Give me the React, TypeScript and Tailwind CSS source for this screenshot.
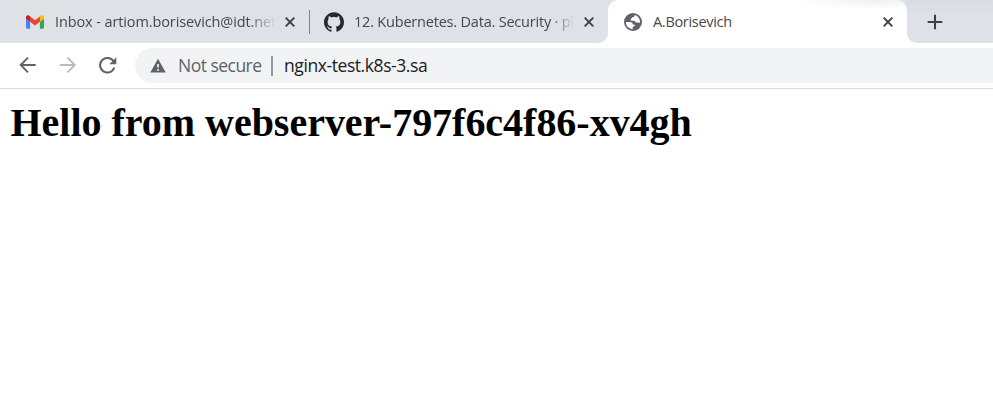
import type { ReactNode } from 'react';
import { SiGithub } from 'react-icons/si';

const CloseIcon = () => (
  <svg className="size-[10px] shrink-0" viewBox="0 0 10 10" fill="none" stroke="#3c4043" strokeWidth="1.9">
    <path d="M.7.7l8.6 8.6M9.3.7L.7 9.3" />
  </svg>
);

const GmailIcon = () => (
  <svg className="h-[14px] w-[18px] shrink-0" viewBox="52 42 88 66">
    <path fill="#4285f4" d="M58 108h14V74L52 59v43c0 3.320 2.690 6 6 6" />
    <path fill="#34a853" d="M120 108h14c3.320 0 6-2.690 6-6V59l-20 15" />
    <path fill="#fbbc04" d="M120 48v26l20-15v-8c0-7.420-8.470-11.650-14.400-7.200" />
    <path fill="#ea4335" d="M72 74V48l24 18 24-18v26L96 92" />
    <path fill="#c5221f" d="M52 51v8l20 15V48l-5.600-4.200C60.470 39.350 52 43.580 52 51" />
  </svg>
);

const GlobeIcon = () => (
  <svg className="size-[18px] shrink-0" viewBox="0 0 18 18">
    <circle cx="9" cy="9" r="9" fill="#5f6368" />
    <path
      fill="#fff"
      d="M10.600 2C10.800 3.400 9.800 4.200 8.400 4.300C7.900 5.600 6.600 5.700 6.600 6.800C6.600 7.900 8 7.700 9.600 7.700C11.200 7.700 11.400 8.800 12 9.700C13.300 9.500 14.500 9.500 16.100 9.900A7.200 7.200 0 0 0 10.600 2Z"
    />
    <path fill="#fff" d="M1.800 9H5.500C7.800 9 8.700 9.700 8.700 11.400H10.500C11.200 12.500 10.500 13.500 8.700 13.700V16.200A7.200 7.200 0 0 1 1.800 9Z" />
  </svg>
);

const TabTitle = ({ children, className }: { children: ReactNode; className: string }) => (
  <span className={`h-5 shrink-0 overflow-hidden whitespace-nowrap text-[14.500px] leading-5 text-[#45494d] ${className}`}>
    {children}
  </span>
);

export default function App() {
  return (
    <div className="h-[402px] w-[993px] overflow-hidden bg-white font-['Open_Sans','Noto_Sans',sans-serif]">
      <div className="flex h-[43px] bg-[#dee1e6]">
        <div className="flex w-[309px] shrink-0 items-center pl-[26px]">
          <GmailIcon />
          <TabTitle className="ml-[11px] w-[221px] tracking-[-0.110px] [mask-image:linear-gradient(to_right,black_87%,transparent)]">
            Inbox - artiom.borisevich@idt.net
          </TabTitle>
          <div className="ml-[9px] flex"><CloseIcon /></div>
        </div>
        <div className="mt-[10px] h-6 w-px shrink-0 bg-[#808489]" />
        <div className="flex w-[298px] shrink-0 items-center pl-[14px]">
          <SiGithub className="size-5 shrink-0 text-[#24292e]" />
          <TabTitle className="ml-[10px] w-[220px] tracking-[-0.200px] [mask-image:linear-gradient(to_right,black_90%,transparent)]">
            12. Kubernetes. Data. Security · pl
          </TabTitle>
          <div className="ml-[10px] flex"><CloseIcon /></div>
        </div>
        <div className="relative flex w-[299px] shrink-0 items-center rounded-t-[10px] bg-white bg-[radial-gradient(ellipse_80px_9px_at_267px_0px,#eef0f2,white)] pl-4">
          <svg className="absolute bottom-0 -left-[10px] size-[10px]" viewBox="0 0 10 10"><path d="M10 0v10H0A10 10 0 0 0 10 0" fill="white" /></svg>
          <GlobeIcon />
          <TabTitle className="ml-[11px] w-[230px] tracking-[-0.300px]">A.Borisevich</TabTitle>
          <CloseIcon />
          <svg className="absolute -right-[10px] bottom-0 size-[10px]" viewBox="0 0 10 10"><path d="M0 0v10h10A10 10 0 0 1 0 0" fill="white" /></svg>
        </div>
        <div className="flex flex-1 items-center bg-linear-to-b from-[#d9dce2] to-[#dee1e6] to-40% pl-[20px]">
          <svg className="size-4" viewBox="0 0 16 16" fill="none" stroke="#3c4043" strokeWidth="2.100" strokeLinecap="round"><path d="M8 1.500v13M1.500 8h13" /></svg>
        </div>
      </div>
      <div className="flex h-[46px] items-center border-b border-[#d8dadd] pl-[19px]">
        <svg className="mb-px size-[18px]" viewBox="0 0 18 18" fill="none" stroke="#5f6368" strokeWidth="1.900"><path d="M16.700 9H2M9 1.700L1.700 9L9 16.300" /></svg>
        <svg className="mb-px ml-[22px] size-[18px]" viewBox="0 0 18 18" fill="none" stroke="#babcbe" strokeWidth="1.900"><path d="M.8 9h14.700M8.500 1.700L15.800 9l-7.300 7.300" /></svg>
        <svg className="mb-px ml-[21px] size-[19px]" viewBox="0 0 19 19"><path d="M15.700 5.600A7.300 7.300 0 1 0 16.300 11.500" fill="none" stroke="#5f6368" strokeWidth="2" /><path d="M18.300 1.300v7h-7z" fill="#5f6368" /></svg>
        <div className="ml-[18px] flex h-[35px] flex-1 items-center rounded-l-full bg-[#f1f3f4] pl-[15px] text-[17.500px]">
          <svg className="size-[16px] shrink-0" viewBox="0 0 16 16"><path d="M8 .8L15.700 14.500H.3z" fill="#5f6368" /><path d="M7.200 6h1.700v3.600H7.200zM7.200 11h1.700v1.700H7.200z" fill="#f1f3f4" /></svg>
          <span className="ml-[12px] w-[93px] shrink-0 whitespace-nowrap tracking-[-0.520px] text-[#5f6368]">Not secure</span>
          <span className="h-5 w-[2px] shrink-0 bg-[#96999c]" />
          <span className="ml-[11px] whitespace-nowrap tracking-[-0.420px] text-[#202124]">nginx-test.k8s-3.sa</span>
        </div>
      </div>
      <h1 className="mt-[11px] ml-[10.500px] font-['Liberation_Serif',serif] text-[40px] leading-[46px] font-bold tracking-[-0.020px] text-black">
        Hello from webserver-797f6c4f86-xv4gh
      </h1>
    </div>
  );
}
